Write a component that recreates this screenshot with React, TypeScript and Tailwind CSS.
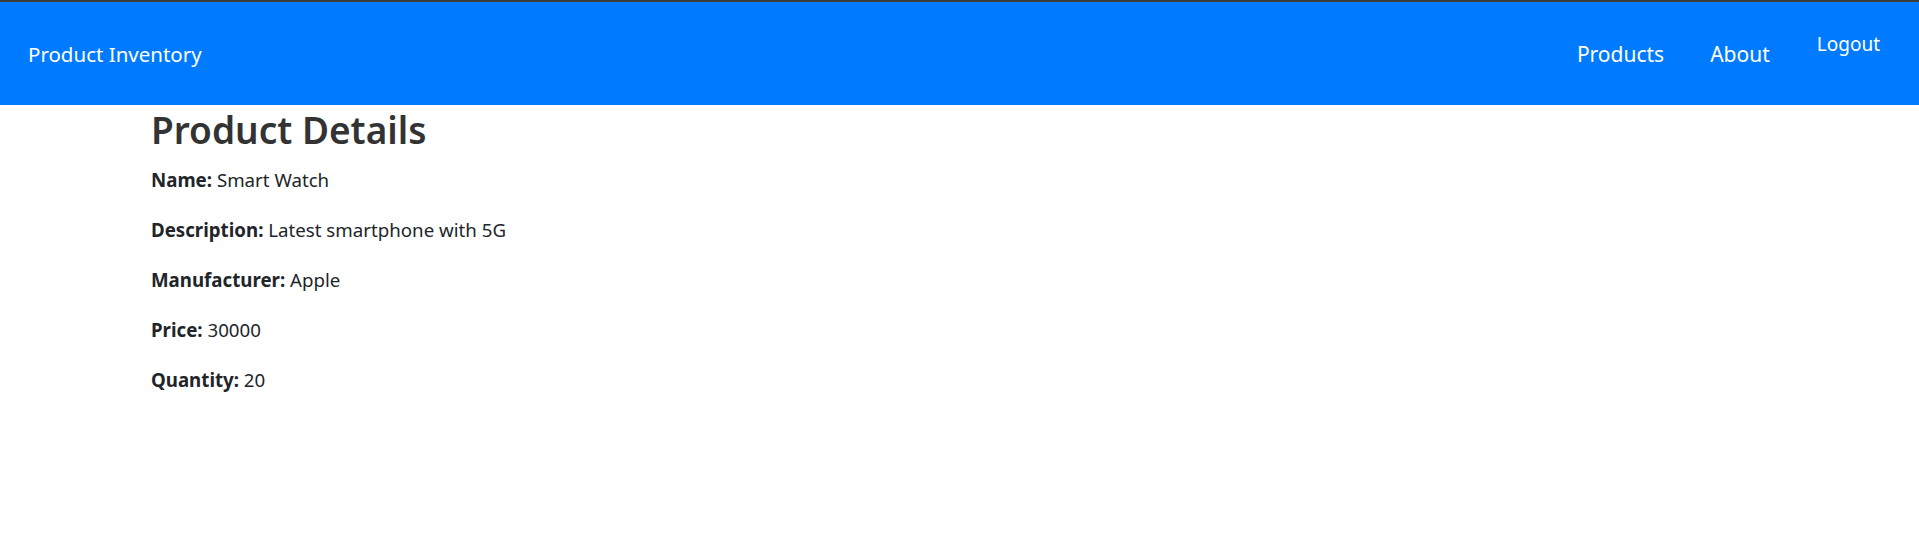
import React from "react";

const rows: [string, string][] = [
  ["Name:", "Smart Watch"],
  ["Description:", "Latest smartphone with 5G"],
  ["Manufacturer:", "Apple"],
  ["Price:", "30000"],
  ["Quantity:", "20"],
];

export default function App() {
  return (
    <div
      className="min-h-[533px] bg-white"
      style={{ fontFamily: '"Noto Sans", "Open Sans", sans-serif' }}
    >
      <div className="h-[2px] bg-[#3c3c3c]" />
      <nav className="flex h-[103px] items-center justify-between bg-[#007bff] pl-[28px] pr-[39px] text-white">
        <span className="mt-[2px] text-[20.5px] leading-none">Product Inventory</span>
        <div className="flex items-center">
          <span className="mt-[2px] text-[21px] leading-none">Products</span>
          <span className="mt-[2px] ml-[46px] text-[21px] leading-none">About</span>
          <span className="mb-[18px] ml-[47px] text-[19px] leading-none">Logout</span>
        </div>
      </nav>
      <main className="pl-[151px]">
        <h2 className="mt-[1px] text-[37px] font-semibold leading-[48px] text-[#333333]">
          Product Details
        </h2>
        <div className="mt-[11px] text-[18.7px] leading-[30px] text-[#212529]">
          {rows.map(([k, v]) => (
            <p key={k} className="mb-[20px]">
              <b className="font-bold">{k}</b> {v}
            </p>
          ))}
        </div>
      </main>
    </div>
  );
}
